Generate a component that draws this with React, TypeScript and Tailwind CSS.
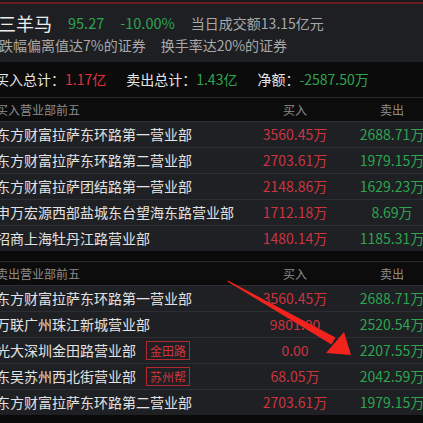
import React from "react";

type Row = { name: string; buy: string; sell: string; tag?: string };

const buyTop: Row[] = [
  { name: "东方财富拉萨东环路第一营业部", buy: "3560.45万", sell: "2688.71万" },
  { name: "东方财富拉萨东环路第二营业部", buy: "2703.61万", sell: "1979.15万" },
  { name: "东方财富拉萨团结路第一营业部", buy: "2148.86万", sell: "1629.23万" },
  { name: "申万宏源西部盐城东台望海东路营业部", buy: "1712.18万", sell: "8.69万" },
  { name: "招商上海牡丹江路营业部", buy: "1480.14万", sell: "1185.31万" },
];

const sellTop: Row[] = [
  { name: "东方财富拉萨东环路第一营业部", buy: "3560.45万", sell: "2688.71万" },
  { name: "万联广州珠江新城营业部", buy: "9801.00", sell: "2520.54万" },
  { name: "光大深圳金田路营业部", buy: "0.00", sell: "2207.55万", tag: "金田路" },
  { name: "东吴苏州西北街营业部", buy: "68.05万", sell: "2042.59万", tag: "苏州帮" },
  { name: "东方财富拉萨东环路第二营业部", buy: "2703.61万", sell: "1979.15万" },
];

function TableHead({ title }: { title: string }) {
  return (
    <div className="grid grid-cols-[251px_88px_106px] w-[445px] h-[24px] items-center border-t border-[#2a2b2f] bg-[#0c0c0d] text-[12px] text-[#8c8c8c]">
      <span className="ml-[-4px] whitespace-nowrap">{title}</span>
      <span className="text-center">买入</span>
      <span className="text-center">卖出</span>
    </div>
  );
}

function TableRow({ row }: { row: Row }) {
  return (
    <div className="grid grid-cols-[251px_88px_106px] w-[445px] h-[26px] items-center border-t border-[#2c2e33] bg-[#1e2024] text-[14px]">
      <div className="ml-[-4px] flex items-center gap-[10px] whitespace-nowrap text-[#e2e2e2]">
        <span>{row.name}</span>
        {row.tag && (
          <span className="h-[19px] px-[3px] flex items-center border border-[#b4282f] text-[12px] text-[#d2343c] leading-none">
            {row.tag}
          </span>
        )}
      </div>
      <span className="text-center whitespace-nowrap text-[#cc3540]">{row.buy}</span>
      <span className="text-center whitespace-nowrap text-[#2ea44f]">{row.sell}</span>
    </div>
  );
}

export default function App() {
  return (
    <div className="relative w-full h-[423px] overflow-hidden bg-[#0a0a0a] font-['Noto_Sans_CJK_SC',sans-serif]">
      <div className="h-[2px] bg-[#19191c]" />
      <div className="h-[2px] bg-[#6b1d23]" />

      {/* stock header */}
      <div className="bg-[#1d1f23] pt-[7px] pb-[7px]">
        <div className="h-[24px] flex items-center gap-[16px] whitespace-nowrap">
          <span className="ml-[-2px] text-[18px] text-[#ededed]">三羊马</span>
          <span className="text-[14.5px] text-[#2ea44f]">95.27</span>
          <span className="text-[14.5px] text-[#2ea44f]">-10.00%</span>
          <span className="text-[14px] text-[#a8a8a8]">当日成交额13.15亿元</span>
        </div>
        <div className="h-[20px] flex items-center gap-[15px] whitespace-nowrap text-[14px] text-[#a8a8a8]">
          <span className="ml-[-1px]">跌幅偏离值达7%的证券</span>
          <span>换手率达20%的证券</span>
        </div>
      </div>

      {/* totals */}
      <div className="h-[35px] flex items-center gap-[20px] whitespace-nowrap bg-[#0b0b0c] text-[14px] text-[#e6e6e6]">
        <span className="ml-[-5px]">
          买入总计：<span className="text-[#e0323c]">1.17亿</span>
        </span>
        <span>
          卖出总计：<span className="text-[#2ea44f]">1.43亿</span>
        </span>
        <span>
          净额：<span className="text-[#2ea44f]">-2587.50万</span>
        </span>
      </div>

      <TableHead title="买入营业部前五" />
      {buyTop.map((r, i) => (
        <TableRow key={i} row={r} />
      ))}

      <div className="h-[10px]" />

      <TableHead title="卖出营业部前五" />
      {sellTop.map((r, i) => (
        <TableRow key={i} row={r} />
      ))}

      {/* red annotation arrow */}
      <svg className="absolute left-0 top-0 pointer-events-none" width="423" height="423" viewBox="0 0 423 423">
        <polygon points="228,280.4 335.5,337.5 331.5,344.5 227.4,281.6" fill="#f2231c" />
        <polygon points="344,332 351,355 326,353" fill="#f2231c" />
      </svg>
    </div>
  );
}
